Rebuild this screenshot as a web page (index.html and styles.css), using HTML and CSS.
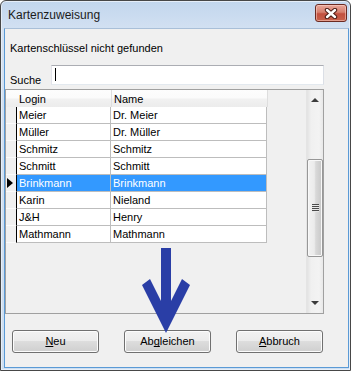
FILE: index.html
```html
<!DOCTYPE html>
<html lang="de">
<head>
    <meta charset="UTF-8">
    <title>Kartenzuweisung</title>
    <link rel="stylesheet" href="styles.css">
</head>
<body>
    <div class="window">
        <div class="titlebar">
            <span class="title">Kartenzuweisung</span>
            <div class="close">
                <svg width="14" height="11" viewBox="0 0 14 11">
                    <path d="M3 2 L11 9 M11 2 L3 9" stroke="#4a1a14" stroke-width="4.4" stroke-linecap="round"/>
                    <path d="M3 2 L11 9 M11 2 L3 9" stroke="#fff" stroke-width="2.4" stroke-linecap="round"/>
                </svg>
            </div>
        </div>
        <div class="client">
            <p class="message">Kartenschlüssel nicht gefunden</p>
            <div class="search-row">
                <span class="search-label">Suche</span>
                <div class="search-input"><span class="caret"></span></div>
            </div>
            <div class="grid">
                <div class="cells">
                    <div class="row head">
                        <div class="rowhead"></div>
                        <div class="cell login">Login</div>
                        <div class="cell name">Name</div>
                    </div>
                    <div class="row">
                        <div class="rowhead"></div>
                        <div class="cell login">Meier</div>
                        <div class="cell name">Dr. Meier</div>
                    </div>
                    <div class="row">
                        <div class="rowhead"></div>
                        <div class="cell login">Müller</div>
                        <div class="cell name">Dr. Müller</div>
                    </div>
                    <div class="row">
                        <div class="rowhead"></div>
                        <div class="cell login">Schmitz</div>
                        <div class="cell name">Schmitz</div>
                    </div>
                    <div class="row">
                        <div class="rowhead"></div>
                        <div class="cell login">Schmitt</div>
                        <div class="cell name">Schmitt</div>
                    </div>
                    <div class="row selected">
                        <div class="rowhead"><span class="marker"></span></div>
                        <div class="cell login">Brinkmann</div>
                        <div class="cell name">Brinkmann</div>
                    </div>
                    <div class="row">
                        <div class="rowhead"></div>
                        <div class="cell login">Karin</div>
                        <div class="cell name">Nieland</div>
                    </div>
                    <div class="row">
                        <div class="rowhead"></div>
                        <div class="cell login">J&amp;H</div>
                        <div class="cell name">Henry</div>
                    </div>
                    <div class="row">
                        <div class="rowhead"></div>
                        <div class="cell login">Mathmann</div>
                        <div class="cell name">Mathmann</div>
                    </div>
                </div>
                <div class="scrollbar">
                    <div class="sb-btn"><span class="arrow-up"></span></div>
                    <div class="thumb">
                        <span class="grip"></span>
                    </div>
                    <div class="sb-btn sb-down"><span class="arrow-down"></span></div>
                </div>
            </div>
            <div class="buttons">
                <div class="button"><u>N</u>eu</div>
                <div class="button">Ab<u>g</u>leichen</div>
                <div class="button"><u>A</u>bbruch</div>
            </div>
        </div>
        <!-- Hinweispfeil auf den Button -->
        <svg class="pointer" width="50" height="87" viewBox="141 247 50 87">
            <polygon points="161,248 171,248 171,301 182,279 190,285 166,333 142,285 150,279 161,301" fill="#2a3ea6"/>
        </svg>
    </div>
</body>
</html>
```

FILE: styles.css
```css
* {
  margin: 0;
  padding: 0;
  box-sizing: border-box;
}

body {
  background: #fff;
  font-family: "Liberation Sans", Arial, sans-serif;
  font-size: 11px;
  color: #000;
}

.window {
  position: relative;
  width: 351px;
  height: 371px;
  border: 1px solid #474747;
  border-radius: 6px 6px 0 0;
  padding: 0 1px 2px 3px;
  background: linear-gradient(#c2d6ed, #d3e1f2 30px, #cddef0);
  box-shadow: inset 0 0 0 1px #e6eef8;
  display: flex;
  flex-direction: column;
}

.titlebar {
  height: 27px;
  display: flex;
  align-items: center;
  justify-content: space-between;
  padding-left: 4px;
}

.title {
  font-size: 12px;
  color: #1b1b1b;
}

.close {
  align-self: flex-start;
  margin-top: 3px;
  margin-right: 2px;
  width: 32px;
  height: 18px;
  border: 1px solid #6b2a22;
  border-radius: 3px;
  background: linear-gradient(#e8a699, #d6806f 45%, #c2503f 55%, #c8624c);
  box-shadow: inset 0 0 0 1px rgba(255, 220, 210, 0.5);
  display: flex;
  align-items: center;
  justify-content: center;
}

.client {
  flex: 1;
  background: #f0f0f0;
  border: 1px solid #5a9ad6;
  border-top-color: #a9bfd8;
}

.message {
  margin: 12px 0 0 5px;
  line-height: 14px;
}

.search-row {
  margin-top: 10px;
  height: 24px;
  display: flex;
}

.search-label {
  width: 46px;
  padding: 8px 0 0 5px;
  line-height: 14px;
}

.search-input {
  width: 273px;
  height: 20px;
  background: #fff;
  border: 1px solid #e3e9ef;
  border-top-color: #abadb3;
  border-left-color: #e2e3ea;
  border-right-color: #dbdfe6;
  padding: 2px 0 0 3px;
}

.caret {
  display: block;
  width: 1px;
  height: 13px;
  background: #000;
}

.grid {
  width: 319px;
  height: 225px;
  border: 1px solid #a0a0a0;
  background: #f0f0f0;
  display: flex;
}

.cells {
  flex: 1;
}

.row {
  display: flex;
  height: 17px;
  line-height: 16px;
}

.rowhead {
  width: 10px;
  background: #f0f0f0;
  border-bottom: 1px solid #fbfbfb;
  position: relative;
}

.cell {
  background: #fff;
  border-bottom: 1px solid #bdbdbd;
  border-right: 1px solid #bdbdbd;
  padding-left: 2px;
  white-space: nowrap;
  overflow: hidden;
}

.cell.login {
  width: 95px;
  border-left: 1px solid #000;
}

.cell.name {
  width: 156px;
}

.row.head .rowhead,
.row.head .cell {
  background: linear-gradient(#fdfdfd, #fbfbfb 45%, #f1f1f1 55%, #ececec);
  border-bottom: 0;
  line-height: 17px;
  padding-top: 1px;
}

.row.head .cell {
  border-right-color: #dedede;
}

.row.head .cell.login {
  border-left: 0;
  width: 96px;
  padding-left: 3px;
}

.row.selected .cell {
  background: #3399ff;
  color: #fff;
}

.marker {
  position: absolute;
  left: 1px;
  top: 3px;
  width: 0;
  height: 0;
  border-top: 5px solid transparent;
  border-bottom: 5px solid transparent;
  border-left: 6px solid #000;
}

.scrollbar {
  width: 17px;
  display: flex;
  flex-direction: column;
  background: linear-gradient(to right, #e2e2e2, #f0f0f0 25%, #f3f3f3 75%, #e8e8e8);
  border-left: 1px solid #e4e4e4;
}

.sb-btn {
  height: 17px;
  display: flex;
  align-items: center;
  justify-content: center;
}

.sb-down {
  margin-top: auto;
}

.arrow-up {
  width: 0;
  height: 0;
  border-left: 4px solid transparent;
  border-right: 4px solid transparent;
  border-bottom: 4px solid #3c3c3c;
  margin-top: 3px;
}

.arrow-down {
  width: 0;
  height: 0;
  border-left: 4px solid transparent;
  border-right: 4px solid transparent;
  border-top: 4px solid #3c3c3c;
  margin-top: -3px;
}

.thumb {
  margin-top: 52px;
  height: 98px;
  border: 1px solid #979797;
  border-radius: 2px;
  background: linear-gradient(to right, #f2f2f2, #ebebeb 45%, #d9d9d9 55%, #c7c7c7);
  box-shadow: inset 0 0 0 1px #f8f8f8;
  display: flex;
  align-items: center;
  justify-content: center;
}

.grip {
  width: 7px;
  height: 8px;
  background: repeating-linear-gradient(#4a4a4a 0, #4a4a4a 1px, #e8e8e8 1px, #e8e8e8 2px);
}

.buttons {
  margin-top: 16px;
  padding-left: 7px;
  display: flex;
  gap: 25px;
}

.button {
  width: 87px;
  height: 23px;
  border: 1px solid #707070;
  border-radius: 3px;
  background: linear-gradient(#f2f2f2, #ebebeb 50%, #dddddd 50%, #cfcfcf);
  box-shadow: inset 0 0 0 1px #fcfcfc;
  text-align: center;
  line-height: 21px;
}

.button u {
  text-decoration-skip-ink: none;
}

.pointer {
  position: absolute;
  left: 140px;
  top: 246px;
}
```
